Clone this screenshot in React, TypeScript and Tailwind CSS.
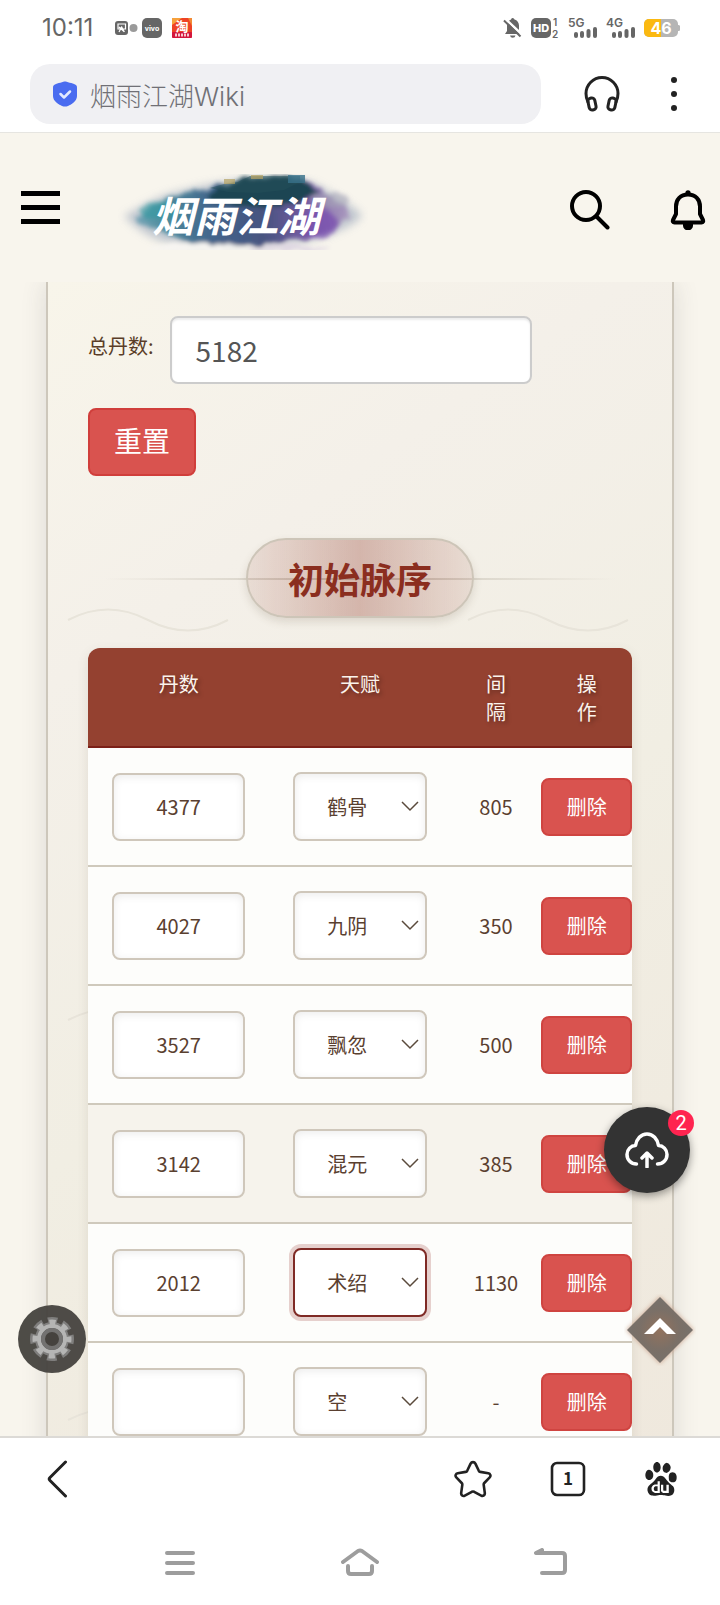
import { useState } from "react";
import { SiBaidu } from "react-icons/si";

type Row = {
    id: number;
    count: string;
    talent: string;
};

const TALENTS = ["鹤骨", "九阴", "飘忽", "混元", "术绍", "空"];

const initialRows: Row[] = [
    { id: 1, count: "4377", talent: "鹤骨" },
    { id: 2, count: "4027", talent: "九阴" },
    { id: 3, count: "3527", talent: "飘忽" },
    { id: 4, count: "3142", talent: "混元" },
    { id: 5, count: "2012", talent: "术绍" },
    { id: 6, count: "", talent: "空" },
];

const SignalIcon = ({ label }: { label: string }) => (
    <svg width="30" height="24" viewBox="0 -2 30 24" fill="#666">
        <text x="0" y="9" fontSize="12" fontWeight="600" fontFamily="Inter, sans-serif">
            {label}
        </text>
        <rect x="6" y="14" width="4" height="6" rx="2" />
        <rect x="12" y="13" width="4" height="7" rx="2" />
        <rect x="18.500" y="11" width="4" height="9" rx="2" />
        <rect x="25" y="9" width="4" height="11" rx="2" />
    </svg>
);

const StatusBar = () => (
    <div className="flex h-14 items-center justify-between pl-[42px] pr-10 text-[#666]">
        <div className="flex items-center">
            <span className="font-[Inter,sans-serif] text-2xl leading-7">10:11</span>
            <svg className="ml-[22px]" width="78" height="28" viewBox="0 -4 78 28">
                <rect x="0" y="3" width="13" height="14" rx="3" fill="#666" />
                <path d="M3 6h7.500v5H3zM4 14l2.700-5 2.700 5M4 9l5 4.500" fill="none" stroke="#fff" strokeWidth="1.200" />
                <circle cx="18.500" cy="10" r="4" fill="#9a9a9a" />
                <rect x="27" y="0" width="20" height="20" rx="5" fill="#666" />
                <text x="37" y="12.500" fontSize="7" fontWeight="700" textAnchor="middle" fill="#fff" fontFamily="Inter, sans-serif">
                    vivo
                </text>
                <rect x="57" y="0" width="20" height="20" rx="2" fill="#ee4326" />
                <path d="M57 0h10l-10 7z" fill="#f6a13c" />
                <path d="M73 0h4v8z" fill="#f28a35" />
                <rect x="57" y="14" width="20" height="6" rx="1" fill="#d3163c" />
                <text x="67" y="12.500" fontSize="13" fontWeight="700" textAnchor="middle" fill="#fff" fontFamily="'Noto Sans CJK SC', sans-serif">
                    淘
                </text>
                <path d="M60 17h14" stroke="#f7c9cf" strokeWidth="3" strokeDasharray="2 1" />
            </svg>
        </div>
        <div className="flex items-center gap-2">
            <svg className="mr-[-4px]" width="19" height="20" viewBox="0 0 19 20">
                <path d="M9.500 0a2 2 0 0 1 2 1.600c2.700.8 4.500 3 4.500 6V13l2 3H2l2-3V7.600c0-3 1.600-5 4-6A2 2 0 0 1 9.500 0zM7 17.500h5.500a2.800 2.800 0 0 1-5.500 0z" fill="#666" />
                <path d="M2.500 1L19 16.500" stroke="#fff" strokeWidth="2.500" />
                <path d="M1 2.500L17.500 18.500" stroke="#666" strokeWidth="2" />
            </svg>
            <svg className="ml-1" width="30" height="28" viewBox="0 -4 30 28" fontFamily="Inter, sans-serif">
                <rect x="1" y="0" width="20" height="20" rx="5" fill="#666" />
                <text x="11" y="14" fontSize="11" fontWeight="800" textAnchor="middle" fill="#fff">
                    HD
                </text>
                <text x="23" y="8" fontSize="10" fontWeight="600" fill="#666">
                    1
                </text>
                <text x="22" y="20" fontSize="10" fontWeight="600" fill="#666">
                    2
                </text>
            </svg>
            <SignalIcon label="5G" />
            <SignalIcon label="4G" />
            <svg width="36" height="18" viewBox="0 0 36 18">
                <rect x="0" y="0" width="34" height="18" rx="5" fill="#b5b5b5" />
                <path d="M5 0h12v18H5a5 5 0 0 1-5-5V5a5 5 0 0 1 5-5z" fill="#fbb911" />
                <path d="M34 6a2 2 0 0 1 2 3 2 2 0 0 1-2 3z" fill="#b5b5b5" />
                <text x="17" y="15" fontSize="16" fontWeight="700" textAnchor="middle" fill="#fff" fontFamily="Inter, sans-serif">
                    46
                </text>
            </svg>
        </div>
    </div>
);

const AddressBar = () => (
    <div className="flex items-center border-b border-[#e6e5e1] py-2 pl-[30px] pr-7">
        <label className="flex h-15 flex-1 items-center gap-3 rounded-[20px] bg-[#f0f0f3] pl-[22px]">
            <svg width="26" height="26" viewBox="0 0 26 26">
                <path
                    d="M13 .5c1 0 8 2 10 3 1.500.8 2 1.600 2 3V15c0 5-5.500 8.500-9 10-2 .8-4 .8-6 0-3.500-1.500-9-5-9-10V6.500c0-1.400.5-2.200 2-3 2-1 9-3 10-3z"
                    fill="#4a6cf0"
                />
                <path d="M8.500 13l3.500 3.500 6-6" fill="none" stroke="#e3eaff" strokeWidth="2.500" strokeLinecap="round" strokeLinejoin="round" />
            </svg>
            <input
                type="text"
                aria-label="地址栏"
                defaultValue="烟雨江湖Wiki"
                className="min-w-0 flex-1 bg-transparent pt-1 font-[Inter,'Noto_Sans_CJK_SC',sans-serif] text-[26px] font-light text-[#707076] outline-none"
            />
        </label>
        <button aria-label="听" className="ml-[43px]">
            <svg width="36" height="36" viewBox="0 0 36 36" fill="none" stroke="#222" strokeWidth="3" strokeLinecap="round" strokeLinejoin="round">
                <path d="M4 26C2.600 23.500 2 21 2 17.500a16 16 0 0 1 32 0c0 3.500-.6 6-2 8.500" />
                <rect x="4.500" y="22" width="7" height="12" rx="3" transform="rotate(-12 8 28)" />
                <rect x="24.500" y="22" width="7" height="12" rx="3" transform="rotate(12 28 28)" />
            </svg>
        </button>
        <button aria-label="更多" className="ml-9">
            <svg width="36" height="36" viewBox="0 0 36 36" fill="#222">
                <circle cx="18" cy="4" r="3" />
                <circle cx="18" cy="18" r="3" />
                <circle cx="18" cy="32" r="3" />
            </svg>
        </button>
    </div>
);

// ink-wash blot behind the calligraphy title
const Logo = () => (
    <svg width="250" height="76" viewBox="0 0 250 76" role="img" aria-label="烟雨江湖">
        <defs>
            <filter id="ink" x="-10%" y="-20%" width="120%" height="140%">
                <feTurbulence type="fractalNoise" baseFrequency="0.06" numOctaves="3" seed="4" result="n" />
                <feDisplacementMap in="SourceGraphic" in2="n" scale="10" xChannelSelector="R" yChannelSelector="G" />
                <feGaussianBlur stdDeviation="2" />
            </filter>
            <filter id="haze" x="-10%" y="-20%" width="120%" height="140%">
                <feGaussianBlur stdDeviation="4" />
            </filter>
            <linearGradient id="wash" x1="0" x2="1" y1="0" y2="0">
                <stop offset="0" stopColor="#6aa0b4" />
                <stop offset="0.150" stopColor="#3a8194" />
                <stop offset="0.350" stopColor="#2c5580" />
                <stop offset="0.600" stopColor="#323f72" />
                <stop offset="0.800" stopColor="#67499a" />
                <stop offset="1" stopColor="#a994bd" />
            </linearGradient>
        </defs>
        <path d="M6 42C22 34 36 22 66 16c30-8 60-12 96-12 26 0 42 8 56 18 14 8 24 16 26 20-10 12-34 20-56 26-40 5-110 5-140 0C30 64 16 52 6 42z" fill="#a9b3c2" opacity="0.700" filter="url(#haze)" />
        <g filter="url(#ink)">
            <path d="M16 44c12-10 28-20 54-25 28-5 50-15 84-16 26 0 42 6 54 16 10 8 22 16 24 24-10 14-44 25-84 27-40 2-78 0-96-8-14-6-28-10-36-18z" fill="url(#wash)" opacity="0.850" />
            <path d="M88 22c14-10 34-19 64-20 22 0 42 6 50 18-30 16-84 18-114 2z" fill="#1c4553" />
            <ellipse cx="202" cy="50" rx="18" ry="15" fill="#7a4fb0" opacity="0.750" />
            <ellipse cx="42" cy="36" rx="20" ry="8" fill="#2f9aa0" opacity="0.600" />
            <ellipse cx="212" cy="26" rx="18" ry="8" fill="#a9a6b9" opacity="0.600" />
            <ellipse cx="84" cy="74" rx="52" ry="4" fill="#f7f5f2" />
            <ellipse cx="170" cy="74" rx="40" ry="3" fill="#dcd3e2" opacity="0.800" />
        </g>
        <path d="M92 14l14-4 14-2 12-6h50v6l-16 8-26 3-30-1z" fill="#24505a" opacity="0.500" />
        <path d="M106 5h11v5h-11zM133 1h12v4h-12z" fill="#b5a263" opacity="0.700" />
        <path d="M170 1h17v8h-17z" fill="#37708a" opacity="0.800" />
        <text x="34" y="58" fontSize="42" fontWeight="700" fontStyle="italic" fill="#fff" fontFamily="'Noto Sans CJK SC', sans-serif">
            烟雨江湖
        </text>
    </svg>
);

const SiteHeader = () => (
    <header className="flex h-[149px] items-center bg-[#f8f5ed] pl-[21px] pr-[14px]">
        <button aria-label="菜单">
            <svg width="39" height="33" viewBox="0 0 39 33">
                <path d="M0 2.500h39M0 16.500h39M0 30.500h39" stroke="#000" strokeWidth="5" />
            </svg>
        </button>
        <a href="#" className="ml-[58px] pt-2">
            <Logo />
        </a>
        <button aria-label="搜索" className="ml-auto pt-1">
            <svg width="40" height="40" viewBox="0 0 40 40" fill="none" stroke="#000" strokeWidth="4">
                <circle cx="16" cy="16" r="14" />
                <path d="M26.500 26.500L37.500 37.500" strokeLinecap="round" />
            </svg>
        </button>
        <button aria-label="通知" className="ml-15 pt-1">
            <svg width="36" height="40" viewBox="0 0 36 40">
                <path
                    d="M18 4.500c-7.500 0-12 5-12 12v7.500L3 30c-.6 1.500 0 2.500 1.500 2.500h27c1.500 0 2.100-1 1.500-2.500l-3-6v-7.500c0-7-4.500-12-12-12z"
                    fill="none"
                    stroke="#000"
                    strokeWidth="4"
                    strokeLinejoin="round"
                />
                <circle cx="18" cy="2.800" r="2.600" />
                <path d="M13 34h10v1.500a5 5 0 0 1-10 0z" />
            </svg>
        </button>
    </header>
);

const App = () => {
    const [total, setTotal] = useState("5182");
    const [rows, setRows] = useState<Row[]>(initialRows);
    const [activeRow, setActiveRow] = useState(5);

    // distance to the next row up, the first one counts from the total
    const getGap = (index: number) => {
        if (!rows[index].count) return "-";
        const prev = index === 0 ? total : rows[index - 1].count;
        return String(Number(prev) - Number(rows[index].count));
    };

    const updateRow = (id: number, patch: Partial<Row>) => {
        setRows(rows.map((row) => (row.id === id ? { ...row, ...patch } : row)));
    };

    const handleReset = () => {
        setTotal("5182");
        setRows(initialRows);
    };

    return (
        <div className="flex h-screen flex-col bg-white font-['Noto_Sans_CJK_SC',sans-serif]">
            <StatusBar />
            <AddressBar />
            <SiteHeader />

            <main className="relative min-h-0 flex-1 overflow-hidden bg-[#f8f5ed]">
                <section className="relative mx-[46px] border-x-2 border-[#cdc7bb] bg-[linear-gradient(145deg,#f8f5ea_0%,#f4f0e9_25%,#f1eee3_55%,#efe8dd_100%)] px-10 pt-[34px] shadow-[0_0_24px_rgba(60,60,70,0.14)]">
                    <svg className="pointer-events-none absolute inset-0 h-full w-full" aria-hidden="true">
                        <defs>
                            <pattern id="waves" width="400" height="400" patternUnits="userSpaceOnUse">
                                <path d="M20 338q40 -21 80 0t80 0" fill="none" stroke="#e8e4da" strokeWidth="2" />
                            </pattern>
                        </defs>
                        <rect width="100%" height="100%" fill="url(#waves)" />
                    </svg>

                    <div className="relative flex items-center gap-4">
                        <label htmlFor="total" className="pb-2 text-xl leading-7 text-[#5a3d28]">
                            总丹数:
                        </label>
                        <input
                            id="total"
                            type="text"
                            value={total}
                            onChange={(e) => setTotal(e.target.value)}
                            className="h-[68px] w-2/3 rounded-lg border-2 border-[#ccc] bg-white px-6 text-[28px] text-[#555] shadow-[inset_0_2px_2px_rgba(0,0,0,0.08)] outline-none"
                        />
                    </div>
                    <button
                        onClick={handleReset}
                        className="relative mt-6 h-[68px] rounded-lg border-2 border-[#d03e3b] bg-[#d9534f] px-6 pb-1 text-[28px] text-white"
                    >
                        重置
                    </button>

                    <div className="relative mt-[62px] flex justify-center">
                        <div className="absolute inset-x-4 top-10 h-[2px] bg-[linear-gradient(90deg,transparent,#c9c3b6,transparent)]"></div>
                        <h2 className="relative flex h-20 items-center rounded-full border-2 border-[#cdc5b8] bg-[linear-gradient(90deg,rgba(139,46,31,0.1),rgba(139,46,31,0.3),rgba(139,46,31,0.1))] px-10 text-4xl font-bold text-[#8b2e1f] shadow-[0_4px_8px_rgba(90,70,50,0.15)]">
                            初始脉序
                        </h2>
                    </div>

                    <div className="relative mt-[30px] overflow-hidden rounded-t-xl shadow-[0_4px_12px_rgba(90,70,50,0.12)]">
                        <table className="w-full table-fixed border-separate border-spacing-0 text-center text-xl text-[#5a4030]">
                            <thead>
                                <tr className="bg-[#944130] align-top leading-7 text-[#fbf3ec] [text-shadow:2px_2px_4px_rgba(0,0,0,0.35)]">
                                    <th className="h-[100px] w-1/3 border-b-2 border-[#7b2018] pt-[22px] font-normal">丹数</th>
                                    <th className="w-1/3 border-b-2 border-[#7b2018] pt-[22px] font-normal">天赋</th>
                                    <th className="w-1/6 border-b-2 border-[#7b2018] px-8 pt-[22px] font-normal">间隔</th>
                                    <th className="w-1/6 border-b-2 border-[#7b2018] px-8 pt-[22px] font-normal">操作</th>
                                </tr>
                            </thead>
                            <tbody>
                                {rows.map((row, i) => (
                                    <tr key={row.id} className={row.id === 4 ? "bg-[#f6f3ec]" : "bg-[#fdfdfb]"}>
                                        <td className="border-b-2 border-[#cfc9bc] px-6">
                                            <input
                                                type="text"
                                                aria-label="丹数"
                                                value={row.count}
                                                onChange={(e) => updateRow(row.id, { count: e.target.value })}
                                                className="block h-[68px] w-full rounded-lg border-2 border-[#cfc7bb] bg-white text-center shadow-[inset_0_2px_8px_rgba(0,0,0,0.08)] outline-none"
                                            />
                                        </td>
                                        <td className="border-b-2 border-[#cfc9bc] px-6 py-6">
                                            <div className="relative">
                                                <select
                                                    aria-label="天赋"
                                                    value={row.talent}
                                                    onFocus={() => setActiveRow(row.id)}
                                                    onChange={(e) => updateRow(row.id, { talent: e.target.value })}
                                                    className={`block h-[69px] w-full appearance-none rounded-lg border-2 bg-white pl-8 outline-none ${
                                                        row.id === activeRow
                                                            ? "border-[#7f2a25] shadow-[0_0_0_4px_rgba(148,50,40,0.22)]"
                                                            : "border-[#cfc7bb] shadow-[inset_0_2px_8px_rgba(0,0,0,0.08)]"
                                                    }`}
                                                >
                                                    {TALENTS.map((name) => (
                                                        <option key={name}>{name}</option>
                                                    ))}
                                                </select>
                                                <svg className="pointer-events-none absolute right-2 top-7" width="18" height="12" viewBox="0 0 18 12">
                                                    <path d="M1 2l8 8 8-8" fill="none" stroke="#5a4a3c" strokeWidth="1.500" />
                                                </svg>
                                            </div>
                                        </td>
                                        <td className="border-b-2 border-[#cfc9bc]">{getGap(i)}</td>
                                        <td className="border-b-2 border-[#cfc9bc]">
                                            <button
                                                onClick={() => setRows(rows.filter((r) => r.id !== row.id))}
                                                className="block h-[58px] w-full whitespace-nowrap rounded-lg border-2 border-[#cf4440] bg-[#d9534f] text-white"
                                            >
                                                删除
                                            </button>
                                        </td>
                                    </tr>
                                ))}
                            </tbody>
                        </table>
                    </div>
                </section>

                <button aria-label="上传" className="absolute bottom-[243px] right-[30px] flex h-[86px] w-[86px] items-center justify-center rounded-full bg-[#333] shadow-[0_3px_8px_rgba(0,0,0,0.4)]">
                    <svg width="44" height="36" viewBox="0 0 44 36" fill="none" stroke="#fff" strokeWidth="3.500" strokeLinecap="round" strokeLinejoin="round">
                        <path d="M11.500 32c-5.500 0-9.500-4-9.500-9.500 0-5 4-9 8.500-9C11.500 7 16 2 22 2s10.500 5 11.500 11.500c4.500 0 8.500 4 8.500 9 0 5.500-4 9.500-9.500 9.500" />
                        <path d="M22 35V22M17 26l5-5 5 5" />
                    </svg>
                    <span className="absolute -right-1 top-[3px] flex h-[26px] w-[26px] items-center justify-center rounded-full bg-[#ff2450] font-[Roboto,sans-serif] text-xl text-white">
                        2
                    </span>
                </button>

                <button aria-label="回到顶部" className="absolute bottom-[70px] right-6">
                    <svg width="72" height="72" viewBox="0 0 72 72">
                        <defs>
                            <radialGradient id="glow">
                                <stop offset="0" stopColor="#8f6f5a" />
                                <stop offset="0.600" stopColor="#766c64" />
                                <stop offset="1" stopColor="#726d68" />
                            </radialGradient>
                            <filter id="soft" x="-20%" y="-20%" width="140%" height="140%">
                                <feGaussianBlur stdDeviation="2" />
                            </filter>
                        </defs>
                        <path d="M36 2l34 34-34 34L2 36z" fill="#c59b83" opacity="0.700" filter="url(#soft)" />
                        <path d="M36 3l33 33-33 33L3 36z" fill="url(#glow)" opacity="0.950" />
                        <path d="M36 24l16 16h-9l-7-7-7 7h-9z" fill="#fff" />
                    </svg>
                </button>

                <button aria-label="设置" className="absolute bottom-[63px] left-[18px] flex h-[68px] w-[68px] items-center justify-center rounded-full bg-[#45423e]/95">
                    <svg width="44" height="44" viewBox="0 0 44 44">
                        <circle cx="22" cy="22" r="18" fill="none" stroke="#7f7e7d" strokeWidth="8" strokeDasharray="9 5.137" strokeDashoffset="4.500" />
                        <circle cx="22" cy="22" r="14" fill="none" stroke="#7f7e7d" strokeWidth="6" />
                        <circle cx="22" cy="22" r="16.500" fill="none" stroke="#b5b5b4" strokeWidth="6" strokeDasharray="6 6.959" strokeDashoffset="3" />
                        <circle cx="22" cy="22" r="13" fill="none" stroke="#b5b5b4" strokeWidth="4" />
                        <circle cx="22" cy="22" r="9" fill="#45423e" stroke="#737271" strokeWidth="4" />
                    </svg>
                </button>
            </main>

            <footer className="border-t-2 border-[#dcdad6] bg-white">
                <div className="flex h-[82px] items-center gap-[58px] pl-[46px] pr-[42px]">
                    <button aria-label="返回" className="mr-auto">
                        <svg width="22" height="38" viewBox="0 0 22 38" fill="none" stroke="#222" strokeWidth="3" strokeLinecap="round" strokeLinejoin="round">
                            <path d="M19.500 2L4 17.500q-1.500 1.500 0 3L19.500 36" />
                        </svg>
                    </button>
                    <button aria-label="收藏">
                        <svg width="38" height="38" viewBox="0 0 38 38" fill="none" stroke="#222" strokeWidth="2.600" strokeLinejoin="round">
                            <path d="M16.600 3.600c1-2 3.800-2 4.800 0l3.400 7.200c.3.600.8 1 1.500 1.100l8 1.300c2 .4 2.900 2.700 1.400 4.200l-5.400 5.600c-.5.500-.7 1.100-.6 1.800l1.100 8.100c.3 2.200-1.700 3.700-3.600 2.700l-7-3.800c-.7-.3-1.700-.3-2.400 0l-7 3.800c-1.900 1-3.900-.5-3.600-2.700l1.100-8.100c.1-.7-.1-1.300-.6-1.800l-5.400-5.600c-1.500-1.500-.6-3.800 1.400-4.200l8-1.300c.7-.1 1.200-.5 1.500-1.100z" />
                        </svg>
                    </button>
                    <button aria-label="标签页">
                        <svg width="36" height="36" viewBox="0 0 36 36">
                            <rect x="2" y="2" width="32" height="32" rx="5" fill="none" stroke="#222" strokeWidth="2.600" />
                            <text x="18" y="24" fontSize="17" fontWeight="700" textAnchor="middle" fill="#222" fontFamily="'Noto Sans CJK SC', sans-serif">
                                1
                            </text>
                        </svg>
                    </button>
                    <button aria-label="百度">
                        <SiBaidu size={34} color="#222" />
                    </button>
                </div>
                <nav className="flex h-[85px] items-center justify-center gap-[120px]">
                    <button aria-label="最近任务">
                        <svg width="60" height="30" viewBox="0 0 60 30" stroke="#9d9d9d" strokeWidth="4" strokeLinecap="round">
                            <path d="M17 5h26M17 15h26M17 25h26" />
                        </svg>
                    </button>
                    <button aria-label="主页">
                        <svg width="60" height="30" viewBox="0 0 60 30" fill="none" stroke="#9d9d9d" strokeWidth="4" strokeLinecap="round" strokeLinejoin="round">
                            <path d="M13 14L28 3q2-1 4 0L47 14M18 18v5q0 3 3 3h18q3 0 3-3v-5" />
                        </svg>
                    </button>
                    <button aria-label="后退">
                        <svg width="60" height="30" viewBox="0 0 60 30" fill="none" stroke="#9d9d9d" strokeWidth="4" strokeLinecap="round" strokeLinejoin="round">
                            <path d="M32 2l-6 3h26q3 0 3 3v14q0 3-3 3H32" />
                        </svg>
                    </button>
                </nav>
            </footer>
        </div>
    );
};
export default App;
